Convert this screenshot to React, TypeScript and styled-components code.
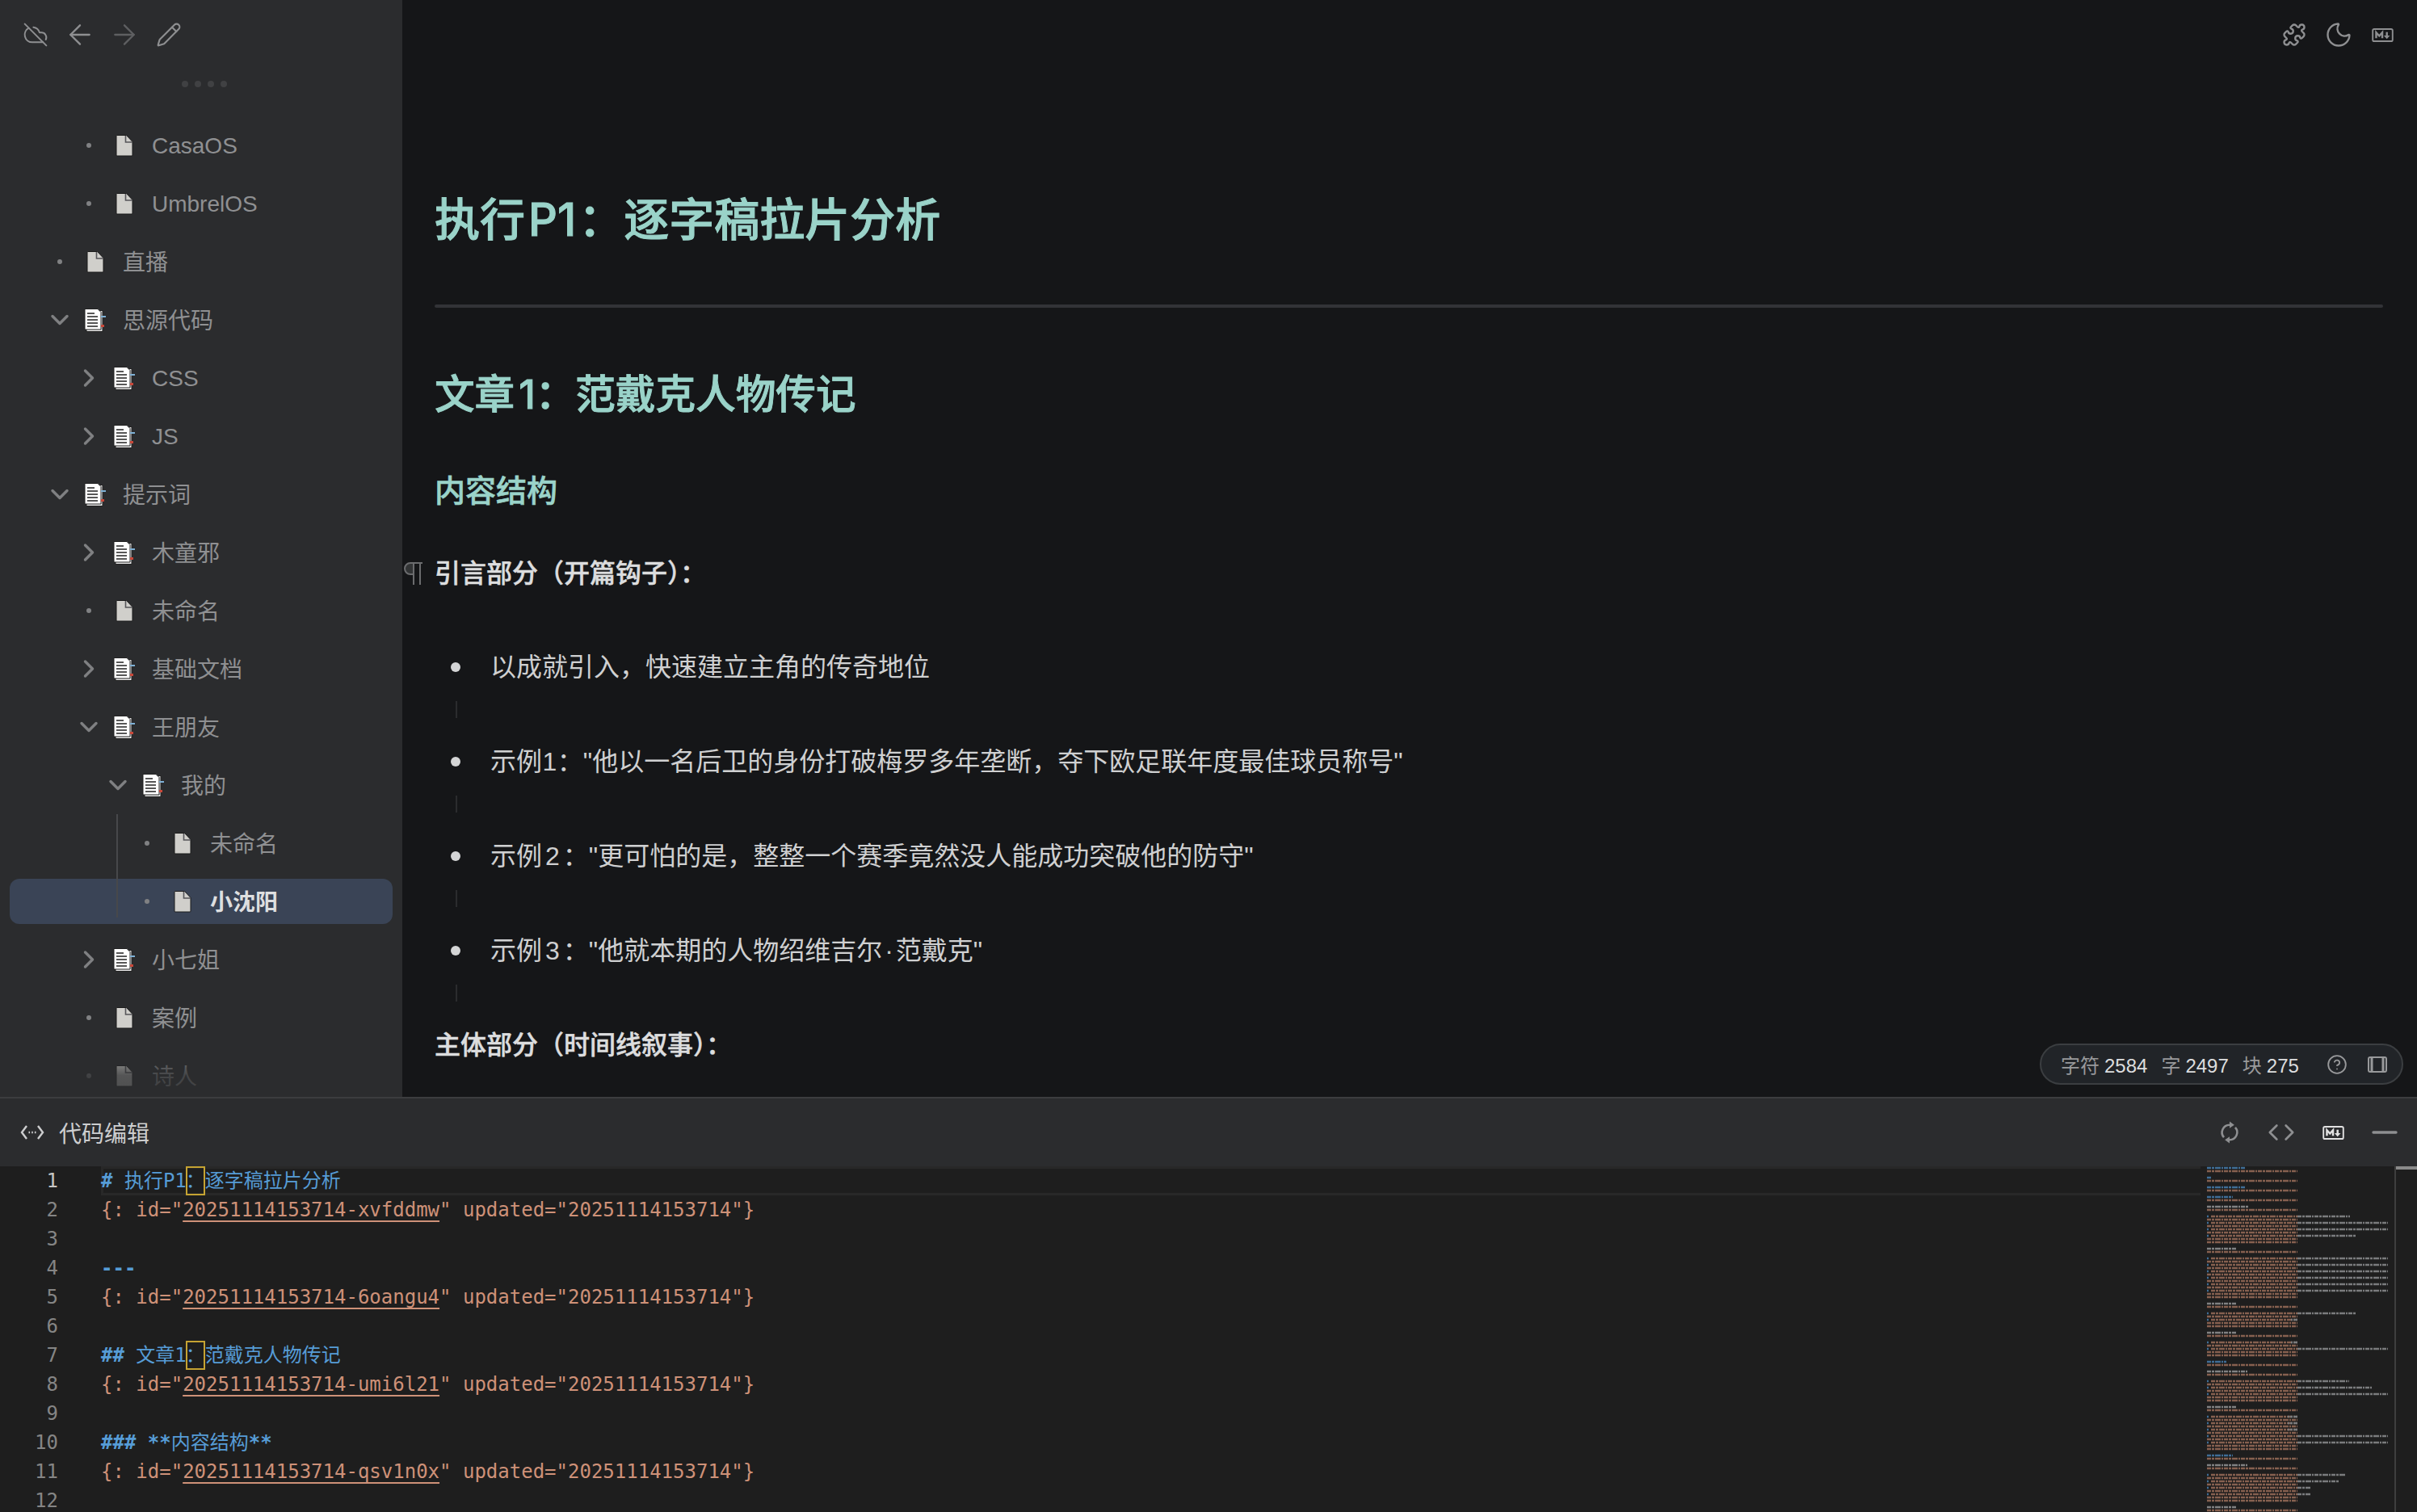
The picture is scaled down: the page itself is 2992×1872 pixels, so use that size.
import React from 'react';
import styled, { createGlobalStyle } from 'styled-components';
import {
  ArrowLeft,
  ArrowRight,
  ChevronDown,
  ChevronRight,
  CircleHelp,
  Code,
  CloudOff,
  Minus,
  Moon,
  Pencil,
  Puzzle,
} from 'lucide-react';

const sans = `"Liberation Sans", "Noto Sans CJK SC", sans-serif`;
const heading = `Inter, "Noto Sans CJK SC", sans-serif`;
const mono = `"DejaVu Sans Mono", "Noto Sans CJK SC", monospace`;

const GlobalStyle = createGlobalStyle`
  html, body {
    margin: 0;
    padding: 0;
    background: #151618;
    overflow: hidden;
  }
  * {
    box-sizing: border-box;
  }
`;

const Page = styled.div`
  width: 2992px;
  height: 1872px;
  display: flex;
  flex-direction: column;
  overflow: hidden;
  font-family: ${sans};
`;

const Workspace = styled.div`
  height: 1358px;
  display: flex;
  flex: none;
`;

const Sidebar = styled.aside`
  position: relative;
  width: 498px;
  flex: none;
  background: #2b2c2e;
  overflow: hidden;
`;

const Toolbar = styled.div`
  height: 86px;
  display: flex;
  align-items: center;
  padding-left: 16px;
`;

const ToolSlot = styled.span<{ $dim?: boolean }>`
  width: 55px;
  height: 46px;
  display: flex;
  align-items: center;
  justify-content: center;
  flex: none;
  color: ${(p) => (p.$dim ? '#5e5f61' : '#8e8f91')};
`;

const DragHandle = styled.div`
  height: 36px;
  display: flex;
  align-items: center;
  justify-content: center;
  gap: 8px;
  padding-left: 8px;

  i {
    width: 8px;
    height: 8px;
    border-radius: 50%;
    background: #404143;
  }
`;

const Tree = styled.ul`
  list-style: none;
  margin: 0;
  padding: 30px 0 0;
`;

const ChildGroup = styled.div`
  position: relative;

  &::before {
    content: '';
    position: absolute;
    left: 144px;
    top: -8px;
    bottom: 8px;
    width: 2px;
    background: #47484b;
    z-index: 1;
  }
`;

const Row = styled.li<{ $level: number; $selected?: boolean }>`
  width: 474px;
  height: 56px;
  margin: 0 12px 16px;
  padding-left: ${(p) => 44 + p.$level * 36}px;
  display: flex;
  align-items: center;
  border-radius: 12px;
  background: ${(p) => (p.$selected ? '#3a4456' : 'transparent')};
  font-size: 28px;
  font-weight: ${(p) => (p.$selected ? 700 : 400)};
  color: ${(p) => (p.$selected ? '#dedfe0' : '#8f9092')};
`;

const RowLabel = styled.span<{ $latin: boolean }>`
  padding: ${(p) => (p.$latin ? '2px 0 0' : '0 0 3px')};
`;

const ToggleSlot = styled.span`
  width: 36px;
  height: 36px;
  display: flex;
  align-items: center;
  justify-content: center;
  flex: none;
  color: #7f8082;
`;

const Dot = styled.i`
  width: 6px;
  height: 6px;
  border-radius: 50%;
  background: #808183;
`;

const DocSlot = styled.span`
  width: 36px;
  margin: 0 16px 0 8px;
  display: flex;
  justify-content: center;
  flex: none;
`;

const TreeFade = styled.div`
  position: absolute;
  left: 0;
  right: 0;
  bottom: 0;
  height: 66px;
  background: linear-gradient(to bottom, rgba(43, 44, 46, 0), rgba(43, 44, 46, 0.75) 60%, rgba(43, 44, 46, 0.8));
  pointer-events: none;
`;

const Main = styled.main`
  position: relative;
  flex: 1;
  min-width: 0;
  background: #151618;
  overflow: hidden;
`;

const TopBar = styled.div`
  height: 86px;
  display: flex;
  align-items: center;
  justify-content: flex-end;
  padding-right: 15px;
`;

const Article = styled.article`
  padding: 144px 42px 0 40px;
  color: #d3d4d5;
`;

const H1 = styled.h1`
  margin: 0;
  font-family: ${heading};
  font-size: 56px;
  line-height: 84px;
  font-weight: 500;
  -webkit-text-stroke: 1px #9ad3c9;
  color: #9ad3c9;
`;

const Rule = styled.hr`
  height: 4px;
  margin: 63px 0 0;
  border: 0;
  border-radius: 2px;
  background: #323337;
`;

const H2 = styled.h2`
  margin: 71px 0 0;
  font-family: ${heading};
  font-size: 49.6px;
  line-height: 72px;
  font-weight: 500;
  -webkit-text-stroke: 0.9px #9ad3c9;
  color: #9ad3c9;
`;

const H3 = styled.h3`
  margin: 55px 0 0;
  font-family: ${heading};
  font-size: 38px;
  line-height: 56px;
  font-weight: 500;
  -webkit-text-stroke: 0.6px #9ad3c9;
  color: #9ad3c9;
`;

const HeadLatin = styled.span<{ $left: number; $right: number }>`
  margin: 0 ${(p) => p.$right}px 0 ${(p) => p.$left}px;
`;

const Para = styled.p<{ $first?: boolean }>`
  position: relative;
  margin: ${(p) => (p.$first ? '49px 0 64px' : '0')};
  font-size: 32px;
  line-height: 52px;
  font-weight: 500;
  -webkit-text-stroke: 0.5px #dcddde;
  color: #dcddde;
`;

const Pilcrow = styled.svg`
  position: absolute;
  left: -40px;
  top: 11px;
  color: #6b6c6e;
`;

const ListItem = styled.div`
  height: 117px;
`;

const ItemLine = styled.div`
  display: flex;
  align-items: center;
  height: 52px;
  padding-left: 20px;
  font-size: 32px;
  line-height: 52px;
  color: #cfd0d1;
`;

const ItemText = styled.span`
  white-space: pre;
`;

const Spaced = styled.span<{ $gap: number }>`
  margin: 0 ${(p) => p.$gap}px;
`;

const Bullet = styled.i`
  width: 12px;
  height: 12px;
  margin-right: 37px;
  flex: none;
  border-radius: 50%;
  background: #d4d5d6;
`;

const Guide = styled.div`
  width: 2px;
  height: 21px;
  margin: 16px 0 0 26px;
  background: #2b2c2e;
`;

const StatusPill = styled.div`
  position: absolute;
  right: 17px;
  bottom: 15px;
  height: 51px;
  width: 450px;
  padding-left: 24px;
  display: flex;
  align-items: center;
  border: 2px solid #3b3e41;
  border-radius: 26px;
  background: #212428;
  font-size: 24px;
  color: #98999b;
`;

const Stat = styled.span`
  margin-right: 17px;
  white-space: nowrap;

  b {
    margin-left: 6px;
    font-weight: 400;
    color: #dcddde;
  }
`;

const PillIcon = styled.span<{ $gap: number }>`
  margin-left: ${(p) => p.$gap}px;
  display: flex;
  color: #98999b;
`;

const Panel = styled.section`
  flex: 1;
  min-height: 0;
  display: flex;
  flex-direction: column;
  border-top: 2px solid #3c3d3f;
  background: #2b2c2e;
`;

const PanelHeader = styled.header`
  height: 84px;
  flex: none;
  display: flex;
  align-items: center;
  padding: 0 8px 0 25px;
`;

const PanelTitle = styled.span`
  margin-left: 18px;
  font-size: 28px;
  color: #cdcecf;
`;

const PanelActions = styled.div`
  margin-left: auto;
  display: flex;
  align-items: center;
`;

const ActionSlot = styled.span<{ $active?: boolean }>`
  width: 64px;
  height: 46px;
  display: flex;
  align-items: center;
  justify-content: center;
  color: ${(p) => (p.$active ? '#e2e2e2' : '#8e8f91')};

  svg {
    flex: none;
  }
`;

const Editor = styled.div`
  flex: 1;
  min-height: 0;
  display: flex;
  background: #1e1e1e;
  overflow: hidden;
`;

const CodeArea = styled.div`
  width: 2724px;
  flex: none;
  overflow: hidden;
  font-family: ${mono};
  font-size: 24px;
`;

const CodeRow = styled.div`
  display: flex;
  height: 36px;
  line-height: 36px;
`;

const LineNo = styled.span<{ $current?: boolean }>`
  width: 72px;
  margin-right: 53px;
  flex: none;
  text-align: right;
  color: ${(p) => (p.$current ? '#c6c6c6' : '#858585')};
`;

const LineText = styled.span<{ $current?: boolean }>`
  flex: 1;
  white-space: pre;
  box-shadow: ${(p) => (p.$current ? 'inset 0 3px #282828, inset 0 -3px #282828, inset 3px 0 #282828' : 'none')};
`;

const Blue = styled.span`
  color: #569cd6;
`;

const Mark = styled.span`
  font-weight: 700;
`;

const Orange = styled.span`
  color: #ce9178;
`;

const IdLink = styled.span`
  text-decoration: underline;
  text-decoration-thickness: 2px;
  text-underline-offset: 5px;
`;

const ColonBox = styled.span`
  display: inline-block;
  width: 24px;
  height: 36px;
  margin-left: -1px;
  box-shadow: inset 0 0 0 2px #c5a332;
  line-height: 36px;
  vertical-align: top;
`;

const Minimap = styled.svg`
  width: 240px;
  height: 428px;
  flex: none;
`;

const ScrollLane = styled.div`
  flex: 1;
  border-left: 2px solid #3e3e3e;

  &::before {
    content: '';
    display: block;
    height: 4px;
    background: #8a8a8a;
  }
`;

type Node = { label: string; level: number; kind: 'dot' | 'open' | 'closed'; doc?: boolean };

const treeTop: Node[] = [
  { label: 'CasaOS', level: 1, kind: 'dot' },
  { label: 'UmbrelOS', level: 1, kind: 'dot' },
  { label: '直播', level: 0, kind: 'dot' },
  { label: '思源代码', level: 0, kind: 'open', doc: true },
  { label: 'CSS', level: 1, kind: 'closed', doc: true },
  { label: 'JS', level: 1, kind: 'closed', doc: true },
  { label: '提示词', level: 0, kind: 'open', doc: true },
  { label: '木童邪', level: 1, kind: 'closed', doc: true },
  { label: '未命名', level: 1, kind: 'dot' },
  { label: '基础文档', level: 1, kind: 'closed', doc: true },
  { label: '王朋友', level: 1, kind: 'open', doc: true },
  { label: '我的', level: 2, kind: 'open', doc: true },
];

const treeBottom: Node[] = [
  { label: '小七姐', level: 1, kind: 'closed', doc: true },
  { label: '案例', level: 1, kind: 'dot' },
  { label: '诗人', level: 1, kind: 'dot' },
];

const FileIcon = () => (
  <svg width="22" height="27" viewBox="0 0 22 27">
    <path d="M1 1.5a1 1 0 0 1 1-1h11.5L21 8.5V25a1 1 0 0 1-1 1H2a1 1 0 0 1-1-1z" fill="#d0cfcb" stroke="#1b1b1b" />
    <path d="M12.5 1v8H21" fill="none" stroke="#56565a" strokeWidth="1.6" />
  </svg>
);

const SubDocIcon = () => (
  <svg width="28" height="29" viewBox="0 0 28 29">
    <rect x="3" y="2.5" width="20" height="26" fill="#e9e9e9" stroke="#222" />
    <path d="M1 .5h16l4 4V26H1z" fill="#fff" stroke="#222" />
    <path d="M4 6h9M4 10h13M4 14h13M4 18h13M4 22h13" stroke="#222" strokeWidth="1.6" />
    <rect x="21" y="9" width="6" height="2" fill="#7fb1d6" />
    <rect x="21" y="20" width="4" height="3" fill="#c9483a" />
  </svg>
);

const MarkdownIcon = () => (
  <svg width="27" height="17" viewBox="0 0 28 18" fill="none" stroke="currentColor">
    <rect x="1" y="1" width="26" height="16" rx="2" strokeWidth="2" />
    <path d="M5.5 13V5.5L9.5 10l4-4.5V13" strokeWidth="2.6" />
    <path d="M19.5 5v5" strokeWidth="2.6" />
    <path d="M15.5 9.5h8l-4 4.5z" fill="currentColor" stroke="none" />
  </svg>
);

const TreeRow = ({ node, selected }: { node: Node; selected?: boolean }) => (
  <Row $level={node.level} $selected={selected}>
    <ToggleSlot>
      {node.kind === 'dot' && <Dot />}
      {node.kind === 'open' && <ChevronDown size={36} strokeWidth={2.3} />}
      {node.kind === 'closed' && <ChevronRight size={36} strokeWidth={2.3} />}
    </ToggleSlot>
    <DocSlot>{node.doc ? <SubDocIcon /> : <FileIcon />}</DocSlot>
    <RowLabel $latin={/^[A-Za-z]/.test(node.label)}>{node.label}</RowLabel>
  </Row>
);

const listItems: React.ReactNode[] = [
  '以成就引入，快速建立主角的传奇地位',
  <>示例<Spaced $gap={0.5}>1</Spaced>："他以一名后卫的身份打破梅罗多年垄断，夺下欧足联年度最佳球员称号"</>,
  <>示例<Spaced $gap={4}>2</Spaced>："更可怕的是，整整一个赛季竟然没人能成功突破他的防守"</>,
  <>示例<Spaced $gap={4}>3</Spaced>："他就本期的人物绍维吉尔<Spaced $gap={3}>·</Spaced>范戴克"</>,
];

const Attr = ({ id }: { id: string }) => (
  <Orange>
    {'{: id="'}
    <IdLink>{id}</IdLink>
    {'" updated="20251114153714"}'}
  </Orange>
);

const codeLines: React.ReactNode[] = [
  <Blue><Mark>#</Mark> 执行P1<ColonBox>：</ColonBox>逐字稿拉片分析</Blue>,
  <Attr id="20251114153714-xvfddmw" />,
  null,
  <Blue><Mark>---</Mark></Blue>,
  <Attr id="20251114153714-6oangu4" />,
  null,
  <Blue><Mark>##</Mark> 文章1<ColonBox>：</ColonBox>范戴克人物传记</Blue>,
  <Attr id="20251114153714-umi6l21" />,
  null,
  <Blue><Mark>###</Mark> <Mark>**</Mark>内容结构<Mark>**</Mark></Blue>,
  <Attr id="20251114153714-qsv1n0x" />,
  null,
];

// minimap rows: [kind, right end of the line]
type MiniRow = ['h' | 'p' | 'a' | 'li' | 'e', number?];

const section = (kind: 'h' | 'p', width: number, items: number[]): MiniRow[] => {
  const rows: MiniRow[] = [[kind, width], ['a'], ['e']];
  items.forEach((end) => rows.push(['li', end], ['a']));
  if (items.length) rows.push(['a'], ['e']);
  return rows;
};

const miniRows: MiniRow[] = [
  ...section('h', 48, []),
  ['h', 6], ['a'], ['e'],
  ...section('h', 48, []),
  ...section('h', 32, []),
  ...section('p', 52, [185, 232, 232, 192]),
  ...section('p', 36, [232, 232, 232, 232, 232, 232]),
  ...section('p', 36, [192, 112]),
  ...section('p', 36, [112, 232]),
  ...section('h', 24, []),
  ...section('p', 50, [184, 212, 232]),
  ...section('p', 36, [108, 108, 108, 232, 232]),
  ...section('h', 32, []),
  ...section('p', 50, [180, 172, 136, 136]),
  ...section('p', 36, [176]),
];

const MiniLine = ({ x, y, end, color }: { x: number; y: number; end: number; color: string }) => (
  <line x1={x} x2={end} y1={y} y2={y} stroke={color} strokeWidth="2.5" strokeDasharray="5 1 3 1 7 1 2 1" />
);

const MinimapView = () => (
  <Minimap viewBox="0 0 240 428">
    {miniRows.map(([kind, end], i) => {
      const y = 2 + i * 4;
      if (kind === 'e') return null;
      if (kind === 'h') return <MiniLine key={i} x={8} y={y} end={8 + (end ?? 0)} color="#3f6d96" />;
      if (kind === 'p') return <MiniLine key={i} x={8} y={y} end={8 + (end ?? 0)} color="#808182" />;
      if (kind === 'a') return <MiniLine key={i} x={8} y={y} end={120} color="#86604f" />;
      return (
        <g key={i}>
          <MiniLine x={8} y={y} end={10} color="#3f6d96" />
          <MiniLine x={13} y={y} end={120} color="#86604f" />
          <MiniLine x={120} y={y} end={end ?? 120} color="#7a7b7d" />
        </g>
      );
    })}
  </Minimap>
);

export default function App() {
  return (
    <Page>
      <GlobalStyle />
      <Workspace>
        <Sidebar>
          <Toolbar>
            <ToolSlot><CloudOff size={32} strokeWidth={1.5} /></ToolSlot>
            <ToolSlot><ArrowLeft size={40} strokeWidth={1.4} /></ToolSlot>
            <ToolSlot $dim><ArrowRight size={40} strokeWidth={1.4} /></ToolSlot>
            <ToolSlot><Pencil size={32} strokeWidth={1.6} /></ToolSlot>
          </Toolbar>
          <DragHandle><i /><i /><i /><i /></DragHandle>
          <Tree>
            {treeTop.map((node, i) => <TreeRow key={i} node={node} />)}
            <ChildGroup>
              <TreeRow node={{ label: '未命名', level: 3, kind: 'dot' }} />
              <TreeRow node={{ label: '小沈阳', level: 3, kind: 'dot' }} selected />
            </ChildGroup>
            {treeBottom.map((node, i) => <TreeRow key={i} node={node} />)}
          </Tree>
          <TreeFade />
        </Sidebar>
        <Main>
          <TopBar>
            <ToolSlot><Puzzle size={30} strokeWidth={1.9} /></ToolSlot>
            <ToolSlot><Moon size={36} strokeWidth={1.6} /></ToolSlot>
            <ToolSlot><MarkdownIcon /></ToolSlot>
          </TopBar>
          <Article>
            <H1>执行<HeadLatin $left={4} $right={3}>P1</HeadLatin>：逐字稿拉片分析</H1>
            <Rule />
            <H2>文章<HeadLatin $left={5} $right={0}>1</HeadLatin>：范戴克人物传记</H2>
            <H3>内容结构</H3>
            <Para $first>
              <Pilcrow width="26" height="30" viewBox="0 0 26 30" fill="none" stroke="currentColor" strokeWidth="2">
                <path d="M14 2H10a7 7 0 0 0 0 14h4" fill="currentColor" fillOpacity="0.35" />
                <path d="M14 1v28M22 1v28M12 2h13" />
              </Pilcrow>
              引言部分（开篇钩子）：
            </Para>
            {listItems.map((text, i) => (
              <ListItem key={i}>
                <ItemLine><Bullet /><ItemText>{text}</ItemText></ItemLine>
                <Guide />
              </ListItem>
            ))}
            <Para>主体部分（时间线叙事）：</Para>
          </Article>
          <StatusPill>
            <Stat>字符<b>2584</b></Stat>
            <Stat>字<b>2497</b></Stat>
            <Stat>块<b>275</b></Stat>
            <PillIcon $gap={17}><CircleHelp size={26} strokeWidth={1.7} /></PillIcon>
            <PillIcon $gap={25}>
              <svg width="24" height="20" viewBox="0 0 24 20" fill="none" stroke="currentColor" strokeWidth="2">
                <rect x="1" y="1" width="22" height="18" rx="2" />
                <path d="M5 1v18M19 1v18" strokeWidth="3" />
              </svg>
            </PillIcon>
          </StatusPill>
        </Main>
      </Workspace>
      <Panel>
        <PanelHeader>
          <svg width="30" height="22" viewBox="0 0 30 22" fill="none" stroke="#cdcecf" strokeWidth="2.4">
            <path d="M8 3l-6 8 6 8M22 3l6 8-6 8" />
            <path d="M10.5 11h1.6M14.2 11h1.6M17.9 11h1.6" />
          </svg>
          <PanelTitle>代码编辑</PanelTitle>
          <PanelActions>
            <ActionSlot>
              <svg width="28" height="28" viewBox="0 0 24 24" fill="none" stroke="currentColor" strokeWidth="2.2">
                <path d="M12 4A8 8 0 0 0 6 17.3M12 20a8 8 0 0 0 6-13.3" />
                <path d="M12 .5v7L17 4zM12 16.5v7L7 20z" fill="currentColor" stroke="none" />
              </svg>
            </ActionSlot>
            <ActionSlot><Code size={34} strokeWidth={1.9} /></ActionSlot>
            <ActionSlot $active><MarkdownIcon /></ActionSlot>
            <ActionSlot><Minus size={48} strokeWidth={1.7} /></ActionSlot>
          </PanelActions>
        </PanelHeader>
        <Editor>
          <CodeArea>
            {codeLines.map((line, i) => (
              <CodeRow key={i}>
                <LineNo $current={i === 0}>{i + 1}</LineNo>
                <LineText $current={i === 0}>{line}</LineText>
              </CodeRow>
            ))}
          </CodeArea>
          <MinimapView />
          <ScrollLane />
        </Editor>
      </Panel>
    </Page>
  );
}
